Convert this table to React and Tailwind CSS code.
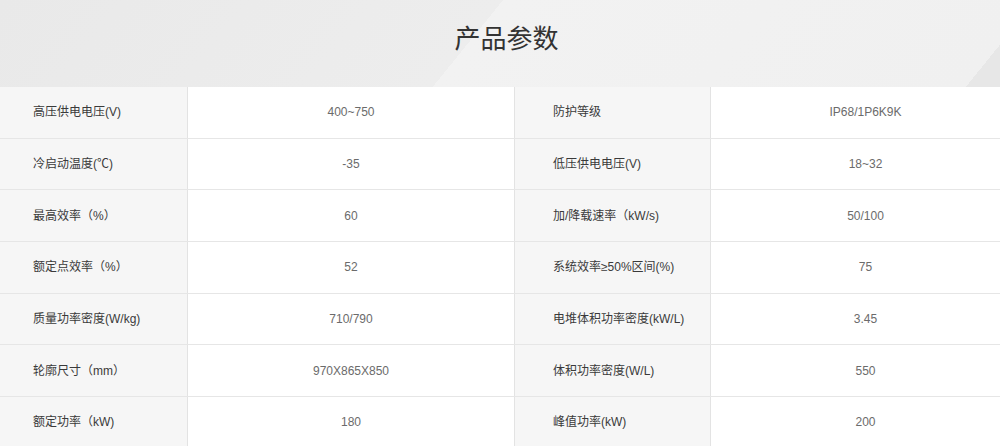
import React from "react";

const rows = [
  ["高压供电电压(V)", "400~750", "防护等级", "IP68/1P6K9K"],
  ["冷启动温度(℃)", "-35", "低压供电电压(V)", "18~32"],
  ["最高效率（%）", "60", "加/降载速率（kW/s)", "50/100"],
  ["额定点效率（%）", "52", "系统效率≥50%区间(%)", "75"],
  ["质量功率密度(W/kg)", "710/790", "电堆体积功率密度(kW/L)", "3.45"],
  ["轮廓尺寸（mm）", "970X865X850", "体积功率密度(W/L)", "550"],
  ["额定功率（kW)", "180", "峰值功率(kW)", "200"],
];

export default function App() {
  return (
    <div className="w-[1000px] h-[446px] overflow-hidden bg-white font-['Liberation_Sans','Noto_Sans_CJK_SC',sans-serif]">
      {/* Title band */}
      <div className="h-[87px] flex items-center justify-center bg-[linear-gradient(129deg,#e9e9e9_0%,#ededed_47%,#f2f2f2_47%,#f0f0f0_96.8%,#e7e7e7_96.8%)]">
        <h2 className="text-[26px] leading-none text-[#333] font-['Noto_Sans_CJK_SC',sans-serif] font-normal ml-[13px] -mt-[14px]">
          产品参数
        </h2>
      </div>

      {/* Parameter table */}
      <div className="flex flex-col">
        {rows.map((r, i) => (
          <div key={i} className="flex h-[51.67px] border-b border-[#e6e6e6] text-[12px]">
            <div className="w-[188px] shrink-0 bg-[#f6f6f6] border-r border-[#e3e3e3] flex items-center pl-[33px] text-[#3a3a3a]">
              {r[0]}
            </div>
            <div className="w-[327px] shrink-0 flex items-center justify-center text-[#6b6b6b] border-r border-[#e3e3e3]">
              {r[1]}
            </div>
            <div className="w-[196px] shrink-0 bg-[#f6f6f6] border-r border-[#e3e3e3] flex items-center pl-[38px] text-[#3a3a3a]">
              {r[2]}
            </div>
            <div className="flex-1 flex items-center justify-center pl-[20px] text-[#6b6b6b]">
              {r[3]}
            </div>
          </div>
        ))}
      </div>
    </div>
  );
}
